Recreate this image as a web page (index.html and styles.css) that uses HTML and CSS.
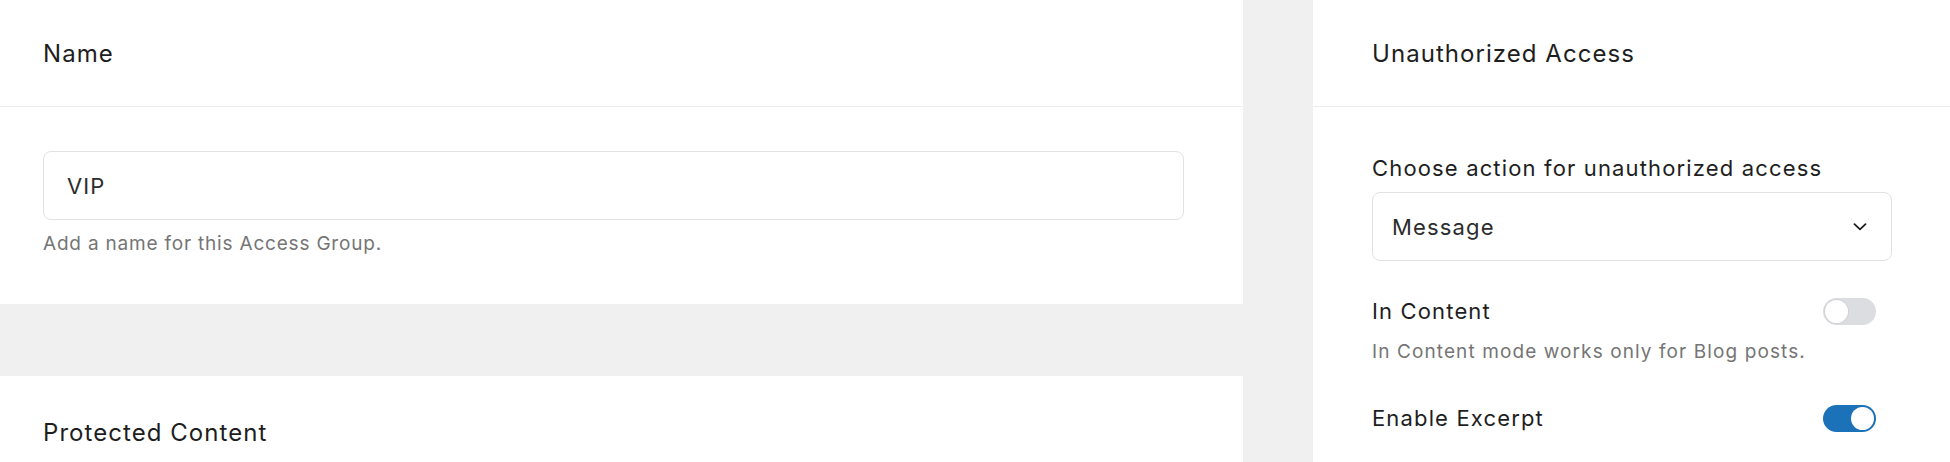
FILE: index.html
```html
<!DOCTYPE html>
<html lang="en">
<head>
<meta charset="utf-8">
<title>Access Group</title>
<link rel="stylesheet" href="styles.css">
</head>
<body>
<div class="layout">
  <div class="main-col">
    <section class="card">
      <header class="card-header"><h2 class="card-title">Name</h2></header>
      <div class="card-body name-body">
        <div class="text-input">VIP</div>
        <p class="help">Add a name for this Access Group.</p>
      </div>
    </section>
    <section class="card card-fill">
      <header class="card-header card-header-low"><h2 class="card-title">Protected Content</h2></header>
    </section>
  </div>
  <aside class="side-col">
    <section class="card side-card">
      <header class="card-header"><h2 class="card-title">Unauthorized Access</h2></header>
      <div class="card-body side-body">
        <label class="field-label">Choose action for unauthorized access</label>
        <div class="select">
          <span class="select-value">Message</span>
          <svg class="chevron" width="14" height="8" viewBox="0 0 14 8" aria-hidden="true"><path d="M1.5 1.2 L7 6.4 L12.5 1.2" fill="none" stroke="#1e1e1e" stroke-width="1.8" stroke-linecap="round" stroke-linejoin="round"/></svg>
        </div>
        <div class="toggle-row first-row">
          <span class="toggle-label">In Content</span>
          <span class="toggle"><span class="knob"></span></span>
        </div>
        <p class="help side-help">In Content mode works only for Blog posts.</p>
        <div class="toggle-row">
          <span class="toggle-label">Enable Excerpt</span>
          <span class="toggle is-on"><span class="knob"></span></span>
        </div>
      </div>
    </section>
  </aside>
</div>
</body>
</html>
```

FILE: styles.css
```css
html, body {
  margin: 0;
  padding: 0;
  height: 462px;
  overflow: hidden;
}
body {
  background: #f0f0f0;
  font-family: Inter, "Noto Sans", "Liberation Sans", sans-serif;
  color: #1e1e1e;
}
.layout {
  display: flex;
  gap: 70px;
  margin-left: -16px;
  width: 1967px;
  height: 462px;
}
.main-col {
  width: 1259px;
  display: flex;
  flex-direction: column;
  gap: 72px;
}
.side-col {
  flex: 1;
  display: flex;
  flex-direction: column;
}
.card {
  background: #ffffff;
}
.card-fill {
  flex: 1;
  min-height: 0;
  overflow: hidden;
}
.side-card {
  flex: 1;
  overflow: hidden;
}
.card-header {
  height: 106px;
  border-bottom: 1px solid #ececec;
  padding: 0 59px;
  display: flex;
  align-items: center;
  flex-shrink: 0;
}
.card-header-low {
  padding-top: 3px;
}
.card-title {
  margin: 0;
  font-size: 24px;
  font-weight: 400;
  color: #1e1e1e;
  letter-spacing: 1.05px;
}
.card-body {
  padding: 0 59px;
}
.name-body {
  padding-top: 44px;
  padding-bottom: 46px;
}
.text-input {
  height: 67px;
  border: 1.5px solid #e2e2e2;
  border-radius: 8px;
  padding: 0 23px;
  display: flex;
  align-items: center;
  font-size: 22px;
  letter-spacing: 1.1px;
  color: #2c2c2c;
}
.help {
  margin: 10px 0 0;
  font-size: 19px;
  line-height: 28px;
  letter-spacing: 0.8px;
  color: #757575;
}
.side-body {
  padding-top: 46px;
}
.field-label {
  display: block;
  font-size: 22px;
  line-height: 30px;
  letter-spacing: 1.15px;
  color: #1e1e1e;
}
.select {
  margin-top: 9px;
  height: 67px;
  border: 1.5px solid #e2e2e2;
  border-radius: 8px;
  padding: 0 24px 0 19px;
  display: flex;
  align-items: center;
  justify-content: space-between;
  font-size: 22px;
  letter-spacing: 1.15px;
  color: #2c2c2c;
}
.chevron {
  display: block;
}
.toggle-row {
  margin-top: 37px;
  height: 30px;
  display: flex;
  align-items: center;
  justify-content: space-between;
  padding-right: 16px;
}
.first-row {
  margin-top: 35px;
}
.toggle-label {
  font-size: 22px;
  letter-spacing: 1.15px;
  color: #1e1e1e;
}
.side-help {
  margin-top: 12px;
  letter-spacing: 1.1px;
}
.toggle {
  width: 53px;
  height: 27px;
  border-radius: 14px;
  background: #dcdde1;
  display: flex;
  align-items: center;
  padding: 0 2px;
  box-sizing: border-box;
}
.knob {
  width: 23px;
  height: 23px;
  border-radius: 50%;
  background: #ffffff;
  box-shadow: 0 0 0 1px #d0d1d5;
}
.toggle.is-on {
  background: #1b72b9;
  justify-content: flex-end;
}
.toggle.is-on .knob {
  box-shadow: none;
}
```
